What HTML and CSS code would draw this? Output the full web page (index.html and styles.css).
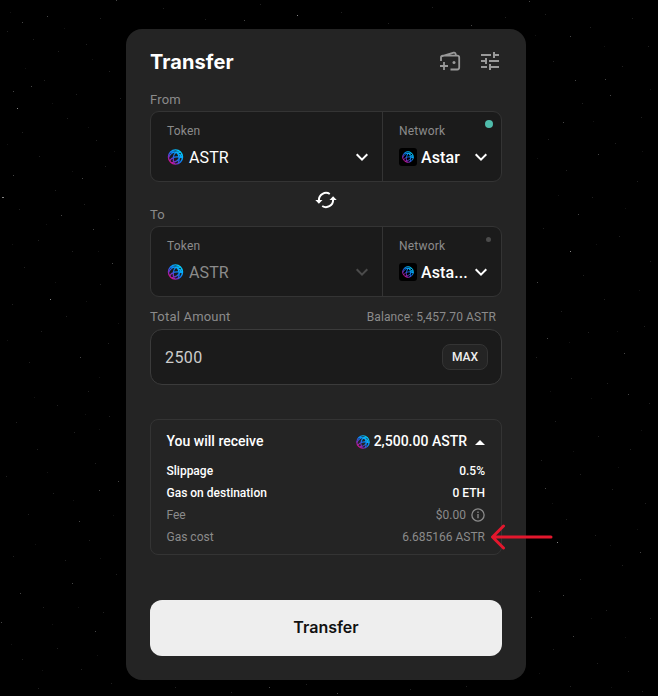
FILE: index.html
```html
<!DOCTYPE html>
<html lang="en">
<head>
<meta charset="utf-8">
<title>Transfer</title>
<link rel="stylesheet" href="styles.css">
</head>
<body>
<svg class="stars" width="658" height="696" aria-hidden="true">
  <path class="s3" d="M2 197h2M297 15h1M17 108h1M50 299h1M157 639h1M361 670h1M570 251h1M557 542h1"/>
  <path class="s2" d="M22 22h1M47 16h1M13 91h1M31 86h1M13 175h1M82 178h1M61 215h1M93 229h1M112 263h1M80 357h1M118 481h1M99 490h1M79 521h1M20 593h1M72 583h1M95 631h1M1 622h1M570 36h1M529 1h1M605 79h1M563 122h1M610 95h1M598 154h1M578 214h1M537 282h1M624 353h1M547 338h1M628 394h1M545 488h1M531 617h1M640 552h1M563 595h1M573 636h1M116 0h1M244 20h1M471 25h1M269 687h1M337 693h1M575 80h1"/>
  <path class="s1" d="M7 31h1M33 39h1M58 51h1M86 44h1M100 18h1M109 71h1M44 80h1M76 94h1M120 98h1M67 118h1M22 132h1M96 140h1M39 156h1M105 166h1M55 190h1M19 209h1M84 204h1M118 219h1M38 240h1M72 251h1M24 267h1M100 284h1M12 304h1M66 316h1M41 331h1M108 343h1M29 362h1M88 391h1M57 405h1M16 422h1M74 432h1M109 416h1M37 449h1M95 463h1M6 476h1M53 493h1M28 514h1M89 540h1M13 556h1M65 560h1M116 574h1M43 607h1M103 612h1M57 648h1M22 659h1M81 669h1M111 683h1M38 688h1M163 8h1M205 19h1M260 4h1M341 12h1M388 23h1M432 7h1M505 17h1M175 687h1M231 692h1M306 684h1M410 689h1M466 686h1M545 14h1M590 27h1M632 18h1M648 46h1M553 61h1M622 66h1M582 103h1M641 117h1M548 139h1M615 143h1M566 170h1M637 181h1M592 197h1M543 228h1M619 236h1M650 261h1M583 275h1M604 299h1M561 311h1M644 326h1M588 332h1M536 357h1M571 378h1M607 383h1M649 403h1M555 421h1M598 436h1M630 449h1M541 460h1M580 474h1M612 489h1M645 503h1M566 519h1M595 535h1M622 565h1M580 579h1M539 591h1M606 610h1M650 618h1M553 649h1M597 663h1M628 671h1M570 686h1M642 691h1"/>
  <path class="s0" d="M10 12h1M64 28h1M92 59h1M25 68h1M52 103h1M88 127h1M7 144h1M114 151h1M72 171h1M46 224h1M12 244h1M98 251h1M55 282h1M86 301h1M118 323h1M7 340h1M99 377h1M34 397h1M85 414h1M99 429h1M47 472h1M73 500h1M113 515h1M35 544h1M100 558h1M52 624h1M78 607h1M11 644h1M42 670h1M97 655h1M535 35h1M604 46h1M650 89h1M593 121h1M537 158h1M642 151h1M558 195h1M625 208h1M596 244h1M639 290h1M569 342h1M617 331h1M591 398h1M550 391h1M641 430h1M573 451h1M618 467h1M552 503h1M637 529h1M610 545h1M591 618h1M625 637h1M539 673h1M611 687h1"/>
</svg>

<svg class="defs" width="0" height="0" aria-hidden="true">
  <defs>
    <linearGradient id="astar-fill" gradientUnits="userSpaceOnUse" x1="15" y1="2" x2="3" y2="15">
      <stop offset="0" stop-color="#00e5ff"/>
      <stop offset=".52" stop-color="#0c7cf8"/>
      <stop offset=".74" stop-color="#7033c8"/>
      <stop offset="1" stop-color="#f0047f"/>
    </linearGradient>
    <symbol id="astar" viewBox="0 0 16 16">
      <g fill="none" stroke="url(#astar-fill)" stroke-width="1.25">
        <circle cx="8" cy="8" r="7.1"/>
        <path d="M1 8.6C3 3.6 8 2 13 3.400M3 3.200C8 1.800 13 5 14.800 9M2.200 11.800C4 8.500 9 6.400 15 9M8.800 2.600C5.500 6 5 11 7 15M9 3C12 6 12.500 11 10.400 14.800M4 13.500C8 13.500 12 11 14 5"/>
      </g>
    </symbol>
    <symbol id="chevron" viewBox="0 0 14 14">
      <path d="M1.700 4.300 7 9.600 12.300 4.300" fill="none" stroke="currentColor" stroke-width="2"/>
    </symbol>
  </defs>
</svg>

<main class="panel">
  <header class="head">
    <h1 class="title">Transfer</h1>
    <div class="tools">
      <svg width="24" height="24" viewBox="0 0 24 24" fill="none" stroke="currentColor" stroke-width="1.800">
        <path d="M3 12V8.500Q3 6.600 4.900 6.600H19.300Q21.200 6.600 21.200 8.500V18.600Q21.200 20.500 19.300 20.500H12.500M3.400 7.300 15.700 3.700Q17.600 3.200 18 6.500M2 17h8M6 13v8"/>
        <circle cx="16" cy="13.500" r="1.500" fill="currentColor" stroke="none"/>
      </svg>
      <svg width="24" height="24" viewBox="0 0 24 24" fill="currentColor">
        <path d="M3 17v2h6v-2H3zM3 5v2h10V5H3zm10 16v-2h8v-2h-8v-2h-2v6h2zM7 9v2H3v2h4v2h2V9H7zm14 4v-2H11v2h10zm-6-4h2V7h4V5h-4V3h-2v6z"/>
      </svg>
    </div>
  </header>

  <div class="label from-label">From</div>
  <section class="picker">
    <div class="cell">
      <span class="caption">Token</span>
      <div class="choice">
        <svg class="coin"><use href="#astar"/></svg>
        <span class="name">ASTR</span>
        <svg class="chevron"><use href="#chevron"/></svg>
      </div>
    </div>
    <div class="cell network">
      <span class="caption">Network</span>
      <div class="choice">
        <span class="chain"><svg><use href="#astar"/></svg></span>
        <span class="name">Astar</span>
        <svg class="chevron"><use href="#chevron"/></svg>
      </div>
      <i class="status online"></i>
    </div>
  </section>

  <div class="swap-row">
    <span class="label">To</span>
    <svg class="swap" width="24" height="24" viewBox="0 0 24 24" fill="none" stroke="currentColor" stroke-width="2">
      <path d="M4.900 13V12A7.100 7.100 0 0 1 15.800 6M19.100 11V12A7.100 7.100 0 0 1 8.200 18"/>
      <path d="M1.300 12h7.200L4.900 15.700zM15.500 12h7.200L19.100 8.300z" fill="currentColor" stroke="none"/>
    </svg>
  </div>

  <section class="picker">
    <div class="cell disabled">
      <span class="caption">Token</span>
      <div class="choice">
        <svg class="coin"><use href="#astar"/></svg>
        <span class="name">ASTR</span>
        <svg class="chevron"><use href="#chevron"/></svg>
      </div>
    </div>
    <div class="cell network">
      <span class="caption">Network</span>
      <div class="choice">
        <span class="chain"><svg><use href="#astar"/></svg></span>
        <span class="name">Asta...</span>
        <svg class="chevron"><use href="#chevron"/></svg>
      </div>
      <i class="status"></i>
    </div>
  </section>

  <div class="amount-labels">
    <span class="label">Total Amount</span>
    <span class="balance">Balance: 5,457.70 ASTR</span>
  </div>
  <div class="amount">
    <span class="value">2500</span>
    <button class="max">MAX</button>
  </div>

  <section class="summary">
    <div class="receive">
      <span>You will receive</span>
      <span class="total">
        <svg class="small-coin"><use href="#astar"/></svg>
        <span class="sum">2,500.00 ASTR</span>
        <svg width="10" height="5" viewBox="0 0 10 5"><path d="M0 5 5 0l5 5z" fill="#fff"/></svg>
      </span>
    </div>
    <div class="row strong"><span class="k1">Slippage</span><span>0.5%</span></div>
    <div class="row strong"><span class="k2">Gas on destination</span><span>0 ETH</span></div>
    <div class="row"><span>Fee</span>
      <span class="fee">$0.00
        <svg width="14" height="14" viewBox="0 0 14 14" fill="none" stroke="currentColor" stroke-width="1.300"><circle cx="7" cy="7" r="6.100"/><path d="M7 6v4.300M7 3.500v1.400"/></svg>
      </span>
    </div>
    <div class="row"><span>Gas cost</span><span class="gas">6.685166 ASTR</span></div>
    <svg class="pointer" width="64" height="28" viewBox="0 0 64 28"><path d="M13.500 3 2.500 14l11 11M3 14h58" fill="none" stroke="#e3172d" stroke-width="3" stroke-linecap="round" stroke-linejoin="round"/></svg>
  </section>

  <button class="submit">Transfer</button>
</main>
</body>
</html>
```
FILE: styles.css
```css
* { box-sizing: border-box; }
body {
  margin: 0;
  height: 696px;
  overflow: hidden;
  padding-top: 29px;
  background: #000;
  color: #fff;
  font-family: Roboto, "Liberation Sans", sans-serif;
}
svg { display: block; flex: none; }
.stars { position: absolute; left: 0; top: 0; }
.stars path { stroke-width: 1; transform: translateY(.5px); }
.s0 { stroke: #131313; }
.s1 { stroke: #202020; }
.s2 { stroke: #454545; }
.s3 { stroke: #858585; }
.defs { position: absolute; }

.panel {
  position: relative;
  width: 400px;
  height: 651px;
  margin-left: 126px;
  padding: 17px 24px 24px;
  border-radius: 16px;
  background: #242424;
}
.head { display: flex; justify-content: space-between; align-items: center; height: 32px; }
.title { margin: 0; font: 700 20px/32px Inter, sans-serif; letter-spacing: .1px; }
.tools { display: flex; gap: 16px; color: #999; margin-bottom: 2px; }
.label { font-size: 13px; line-height: 18px; letter-spacing: .2px; color: #8b8b8b; }
.from-label { margin: 13px 0 2px; }

.picker {
  display: grid;
  grid-template-columns: 231px 1fr;
  height: 71px;
  border: 1px solid #343434;
  border-radius: 9px;
  background: #1b1b1b;
}
.cell { position: relative; padding: 11px 13px 0 16px; }
.network { border-left: 1px solid #343434; }
.caption { display: block; font-size: 12px; line-height: 16px; letter-spacing: .2px; color: #8b8b8b; }
.choice { display: flex; align-items: center; height: 22px; margin-top: 7px; font-size: 16px; font-weight: 500; letter-spacing: .1px; }
.cell:not(.network) .name { font-weight: 400; }
.coin { width: 17px; height: 16px; margin-right: 5px; }
.chevron { width: 14px; height: 14px; margin-left: auto; }
.disabled .name { color: #8b8b8b; }
.disabled .chevron { color: #4b4b4b; }
.chain { display: grid; place-items: center; width: 18px; height: 18px; margin-right: 4px; border-radius: 3px; background: #000; }
.chain svg { width: 12px; height: 12px; }
.status { position: absolute; right: 10px; top: 10px; width: 5px; height: 5px; border-radius: 50%; background: #4b4b4b; }
.online { right: 8px; top: 8px; width: 8px; height: 8px; background: #4fbcab; }

.swap-row { display: grid; grid-template-columns: 1fr 24px 1fr; height: 44px; padding-bottom: 2px; }
.swap-row .label { align-self: end; }
.swap { margin-top: 6px; }

.amount-labels { display: flex; justify-content: space-between; margin: 11px 0 3px; padding-right: 6px; line-height: 18px; }
.balance { font-size: 12px; line-height: 18px; letter-spacing: .1px; color: #8b8b8b; }
.amount {
  display: flex;
  align-items: center;
  justify-content: space-between;
  height: 56px;
  padding: 0 13px 0 14px;
  border: 1px solid #3b3b3b;
  border-radius: 12px;
  background: #1b1b1b;
}
.value { font-size: 16px; letter-spacing: .4px; color: #ccc; }
.max {
  width: 46px;
  height: 26px;
  padding: 0;
  border: 1px solid #343434;
  border-radius: 8px;
  background: #242424;
  color: #eee;
  font: 500 12px/24px Roboto, sans-serif;
}

.summary {
  position: relative;
  height: 136px;
  margin-top: 34px;
  padding: 10px 16px 0 15.5px;
  border: 1px solid #343434;
  border-radius: 8px;
}
.receive { display: flex; justify-content: space-between; height: 22px; margin-bottom: 8px; font-size: 14px; font-weight: 500; line-height: 22px; }
.total { display: flex; align-items: center; }
.small-coin { width: 14px; height: 14px; margin: 2px 4px 0 0; }
.sum { margin-right: 8px; }
.total svg:last-child { margin-top: 2px; }
.row { display: flex; justify-content: space-between; font-size: 12px; line-height: 22px; color: #8b8b8b; }
.strong { color: #fff; font-weight: 500; }
.fee { display: flex; align-items: center; gap: 5px; }
.pointer { position: absolute; left: 339px; top: 103px; }

.submit {
  display: block;
  width: 352px;
  height: 56px;
  margin-top: 45px;
  padding: 0 0 2px;
  border: 0;
  border-radius: 12px;
  background: #eee;
  color: #111;
  font: 600 16px/24px Inter, sans-serif;
}
```
